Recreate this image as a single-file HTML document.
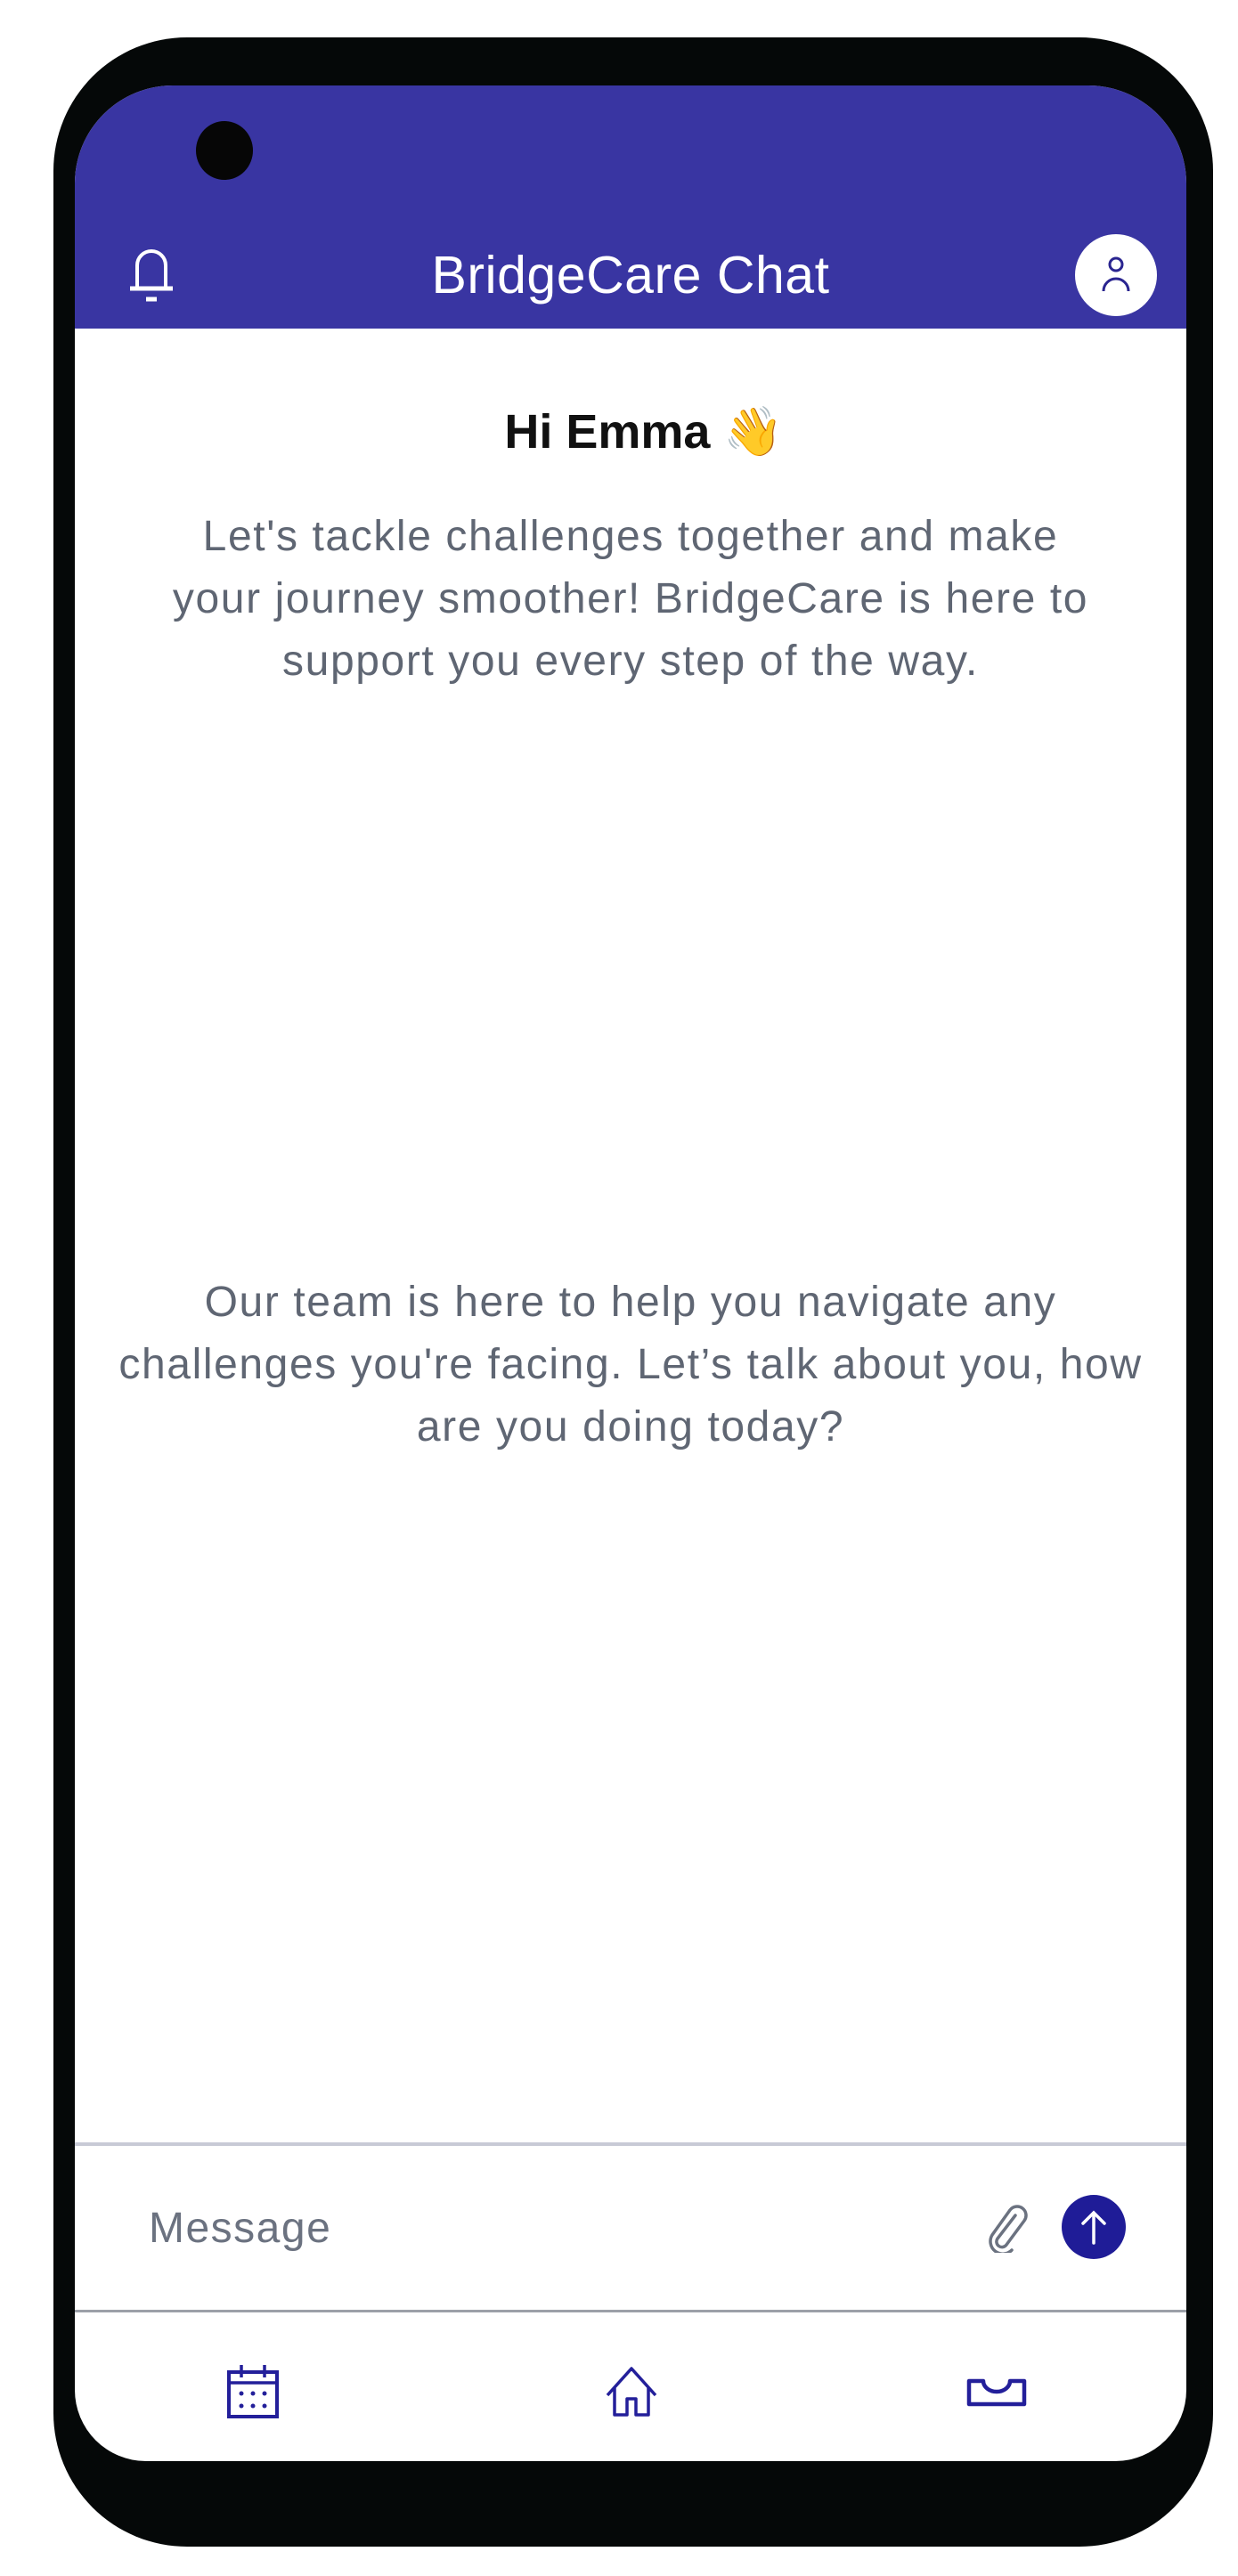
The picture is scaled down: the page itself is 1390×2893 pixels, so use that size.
<!DOCTYPE html>
<html><head><meta charset="utf-8"><style>
html,body{margin:0;padding:0;background:#fff;width:1390px;height:2893px;overflow:hidden;font-family:"Liberation Sans",sans-serif}
.phone{position:absolute;left:60px;top:42px;width:1302px;height:2818px;background:#050808;border-radius:150px}
.screen{position:absolute;left:84px;top:96px;width:1248px;height:2668px;background:#fff;border-radius:110px 110px 80px 80px;overflow:hidden}
.hdr{position:absolute;left:0;top:0;width:1248px;height:273px;background:#3935a2}
.cam{position:absolute;left:136px;top:40px;width:64px;height:66px;border-radius:50%;background:#060606}
.title{position:absolute;left:0;width:1248px;top:178px;text-align:center;color:#fff;font-size:59px;line-height:70px;letter-spacing:0.5px}
.av{position:absolute;left:1123px;top:167px;width:92px;height:92px;border-radius:50%;background:#fff}
.hi{position:absolute;left:0;width:1248px;top:354px;text-align:center;font-weight:bold;font-size:54px;color:#111;line-height:70px;padding-left:30px;box-sizing:border-box}
.p{position:absolute;left:0;width:1248px;text-align:center;font-size:48px;line-height:70px;color:#5f6673;letter-spacing:1.6px;white-space:nowrap}
.ln{position:absolute;left:0;width:1248px}
.msg{position:absolute;left:83px;top:2372px;font-size:48px;line-height:70px;color:#6b7280;letter-spacing:1.5px}
</style></head><body>
<div class="phone"></div>
<div class="screen">
 <div class="hdr">
  <div class="cam"></div>
  <svg style="position:absolute;left:58px;top:180px" width="56" height="64" viewBox="0 0 56 64"><path d="M12 50V22a16 16 0 0 1 32 0v28" fill="none" stroke="#fff" stroke-width="4"/><path d="M4 48h48" stroke="#fff" stroke-width="5"/><path d="M22 60h12" stroke="#fff" stroke-width="5"/></svg>
  <div class="title">BridgeCare Chat</div>
  <div class="av"><svg width="92" height="92" viewBox="0 0 92 92"><circle cx="46" cy="34" r="7" fill="none" stroke="#2a2590" stroke-width="3"/><path d="M32 64a14 14 0 0 1 28 0" fill="none" stroke="#2a2590" stroke-width="3"/></svg></div>
 </div>
 <div class="hi">Hi Emma 👋</div>
 <div class="p" style="top:472px">Let's tackle challenges together and make<br>your journey smoother! BridgeCare is here to<br>support you every step of the way.</div>
 <div class="p" style="top:1332px">Our team is here to help you navigate any<br>challenges you're facing. Let’s talk about you, how<br>are you doing today?</div>
 <div class="ln" style="top:2320px;height:4px;background:#c8cad6;top:2310px"></div>
 <div class="msg">Message</div>
 <svg style="position:absolute;left:1020px;top:2378px" width="52" height="56" viewBox="0 0 52 56"><path d="M36 14L16 40a6 6 0 0 0 10 7l20-27a10 10 0 0 0-16-12L10 36a14 14 0 0 0 22 17" fill="none" stroke="#6b7280" stroke-width="3.5" stroke-linecap="round"/></svg>
 <div style="position:absolute;left:1108px;top:2369px;width:72px;height:72px;border-radius:50%;background:#1f1c97"></div>
 <svg style="position:absolute;left:1108px;top:2369px" width="72" height="72" viewBox="0 0 72 72"><path d="M36 54V20M24 32l12-12 12 12" fill="none" stroke="#fff" stroke-width="3.5" stroke-linecap="round"/></svg>
 <div class="ln" style="top:2498px;height:3px;background:#9ca0a8"></div>
 <svg style="position:absolute;left:170px;top:2558px" width="62" height="64" viewBox="0 0 62 64"><rect x="3" y="10" width="54" height="50" fill="none" stroke="#231f9a" stroke-width="4"/><path d="M3 22h54M17 2v14M43 2v14" stroke="#231f9a" stroke-width="3.5"/><g fill="#231f9a"><circle cx="17" cy="34" r="2.5"/><circle cx="30" cy="34" r="2.5"/><circle cx="43" cy="34" r="2.5"/><circle cx="17" cy="48" r="2.5"/><circle cx="30" cy="48" r="2.5"/><circle cx="43" cy="48" r="2.5"/></g></svg>
 <svg style="position:absolute;left:594px;top:2560px" width="62" height="60" viewBox="0 0 62 60"><path d="M4 34L31 4l27 30M12 26v30h14V38h10v18h14V26" fill="none" stroke="#231f9a" stroke-width="3.5" stroke-linejoin="round"/></svg>
 <svg style="position:absolute;left:1000px;top:2574px" width="70" height="36" viewBox="0 0 70 36"><path d="M4 4h16a15 12 0 0 0 30 0h16v26H4z" fill="none" stroke="#231f9a" stroke-width="4.5" stroke-linejoin="round"/></svg>
</div>
</body></html>
